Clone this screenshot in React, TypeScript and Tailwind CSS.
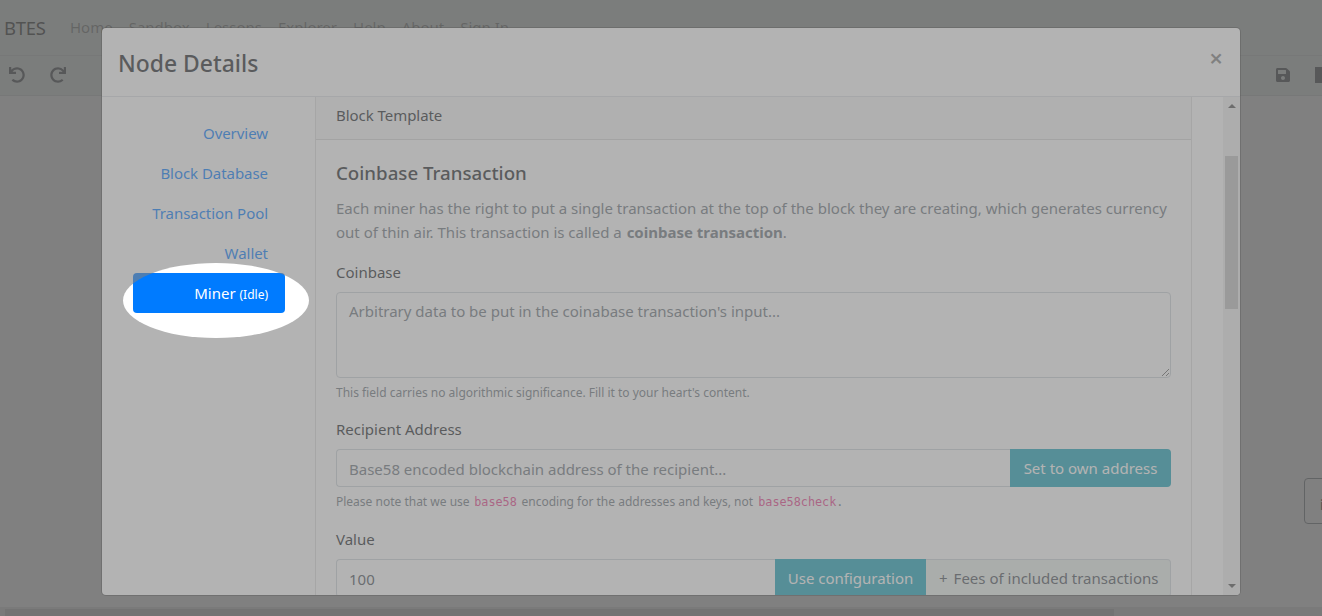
import { FaRedo, FaSave, FaUndo } from "react-icons/fa";

const links = ["Home", "Sandbox", "Lessons", "Explorer", "Help", "About", "Sign In"];
const tabs = ["Overview", "Block Database", "Transaction Pool", "Wallet"];

function TopBar() {
  return (
    <>
      <nav className="flex h-[55px] items-center bg-[#e8f0ec] pl-1 text-[15px]">
        <span className="mr-[24px] w-[42px] text-[18.5px] tracking-[-0.3px] text-black/90">BTES</span>
        <div className="flex gap-4 text-black/50">
          {links.map((l) => <a key={l}>{l}</a>)}
        </div>
      </nav>
      <div className="flex h-[41px] items-center justify-between border-y border-[#d3dad6] bg-[#e8f0ec] pb-[2px] text-[#343a40]">
        <div className="flex gap-[25px] pl-[9px]">
          <FaUndo size={16} />
          <FaRedo size={16} />
        </div>
        <div className="-mr-[9px] flex items-center gap-6">
          <FaSave size={16} />
          <div className="h-4 w-4 bg-[#343a40]" />
        </div>
      </div>
    </>
  );
}

function SideNav() {
  return (
    <div className="w-[213px] shrink-0 pt-4 pl-[31px] text-right text-[15px] text-[#007bff]">
      <div className="w-[152px]">
        {tabs.map((t) => (
          <a key={t} className="block h-10 pr-[17px] leading-10 tracking-[-0.05px] whitespace-nowrap">{t}</a>
        ))}
        <a className="block h-10 rounded bg-[#007bff] pr-[17px] leading-10 text-white">
          Miner <span className="text-[12px]">(Idle)</span>
        </a>
      </div>
    </div>
  );
}

function MinerForm() {
  return (
    <div className="h-[640px] w-[877px] shrink-0 border-x border-black/[.125] text-[15px] leading-6">
      <div className="h-[43px] border-b border-black/[.125] bg-black/[.03] pt-[6px] pl-5 tracking-[-0.05px]">Block Template</div>
      <div className="px-5 pt-[21px]">
        <h5 className="text-[18.7px] leading-6 font-medium">Coinbase Transaction</h5>
        <p className="mt-[11px] whitespace-nowrap text-[#6c757d]">
          Each miner has the right to put a single transaction at the top of the block they are creating, which generates currency<br />
          <span>out of thin air. This transaction is called a <b className="ml-px">coinbase transaction</b>.</span>
        </p>
        <div className="mt-4">Coinbase</div>
        <textarea
          className="mt-2 block h-[86px] w-full rounded border border-[#ced4da] px-3 py-[6px] placeholder:text-[#6c757d]"
          placeholder="Arbitrary data to be put in the coinabase transaction's input..."
        />
        <div className="mt-1 h-5 pt-px text-[12px] leading-5 text-[#6c757d]">This field carries no algorithmic significance. Fill it to your heart's content.</div>
        <div className="mt-[15px]">Recipient Address</div>
        <div className="mt-2 flex h-[38px]">
          <input
            className="min-w-0 flex-1 rounded-l border border-r-0 border-[#ced4da] px-3 pt-[2px] placeholder:text-[#6c757d]"
            placeholder="Base58 encoded blockchain address of the recipient..."
          />
          <button className="w-[161px] rounded-r bg-[#17a2b8] text-white">Set to own address</button>
        </div>
        <div className="mt-1 h-5 pt-px text-[12px] leading-5 whitespace-pre text-[#6c757d]">
          Please note that we use <code className="mx-[1.5px] font-['DejaVu_Sans_Mono',monospace] text-[11.8px] text-[#e83e8c]">base58</code> encoding for the addresses and keys, not <code className="ml-[2px] font-['DejaVu_Sans_Mono',monospace] text-[11.8px] text-[#e83e8c]">base58check</code><code className="font-['DejaVu_Sans_Mono',monospace] text-[11.8px]">.</code>
        </div>
        <div className="mt-4">Value</div>
        <div className="mt-2 flex h-[38px]">
          <input className="min-w-0 flex-1 rounded-l border border-r-0 border-[#ced4da] px-3 pt-[2px] text-[#495057]" defaultValue="100" />
          <button className="w-[151px] bg-[#17a2b8] text-white">Use configuration</button>
          <span className="w-[245px] rounded-r border border-l-0 border-[#ced4da] bg-[#e9efec] pt-[6px] pl-[13px] whitespace-nowrap text-[#495057]">+<span className="ml-[6px]">Fees of included transactions</span></span>
        </div>
      </div>
    </div>
  );
}

function ScrollBar() {
  return (
    <div className="flex w-[17px] shrink-0 flex-col items-center justify-between bg-[#f1f1f1] pt-[7px] pb-[7px]">
      <div className="h-0 w-0 border-x-[4px] border-b-[4px] border-x-transparent border-b-[#505050]" />
      <div className="mt-[48px] mb-auto h-[153px] w-[13px] bg-[#c1c1c1]" />
      <div className="h-0 w-0 border-x-[4px] border-t-[4px] border-x-transparent border-t-[#505050]" />
    </div>
  );
}

export default function App() {
  return (
    <div className="relative flex h-[616px] w-[1322px] flex-col overflow-hidden bg-white font-['Noto_Sans',sans-serif] text-[#212529]">
      <TopBar />
      <main className="relative flex-1">
        <div className="absolute top-[382px] left-[1304px] h-[46px] w-[60px] rounded border border-[#6c757d] pt-[13px] pl-[15px] text-[15px] leading-6 font-bold">i</div>
      </main>
      <div className="h-[9px] bg-[#e4e4e4] pt-[2px] pl-[5px]">
        <div className="h-[7px] w-[1109px] bg-[#c1c1c1]" />
      </div>

      <div className="absolute inset-0 bg-black/50 pt-[28px] pl-[102px]">
        <div className="flex h-[567px] w-[1138px] flex-col overflow-hidden rounded-[4px] bg-white shadow-[0_0_0_1px_rgba(0,0,0,0.3)]">
          <header className="flex h-[69px] shrink-0 items-center justify-between border-b border-[#dee2e6] pr-[17px] pl-4">
            <h4 className="pt-[5px] text-[22.9px] font-medium">Node Details</h4>
            <button className="-mt-[8px] text-[24px] leading-none font-semibold text-black/50">×</button>
          </header>
          <div className="flex min-h-0 flex-1 overflow-hidden">
            <SideNav />
            <MinerForm />
            <div className="flex-1" />
            <ScrollBar />
          </div>
        </div>
      </div>
      <div className="pointer-events-none absolute top-[263px] left-[123px] h-[75px] w-[186px] rounded-[50%] shadow-[0_0_0_4000px_rgba(128,128,128,0.6)]" />
    </div>
  );
}
